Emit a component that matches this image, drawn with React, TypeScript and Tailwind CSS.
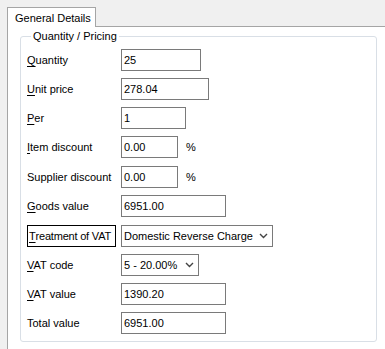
const font = { fontFamily: '"Liberation Sans", Arial, sans-serif' };

type Row = {
  key: string;
  label: string;
  hot?: number;
  value: string;
  width: string;
  kind?: "input" | "select";
  suffix?: string;
  boxed?: boolean;
  extra?: string;
};

const rows: Row[] = [
  { key: "qty", label: "Quantity", hot: 0, value: "25", width: "w-[80px]" },
  { key: "unit", label: "Unit price", hot: 0, value: "278.04", width: "w-[88px]" },
  { key: "per", label: "Per", hot: 0, value: "1", width: "w-[65px]" },
  { key: "item", label: "Item discount", hot: 0, value: "0.00", width: "w-[57px]", suffix: "%" },
  { key: "supp", label: "Supplier discount", value: "0.00", width: "w-[57px]", suffix: "%", extra: "mt-px" },
  { key: "goods", label: "Goods value", hot: 0, value: "6951.00", width: "w-[105px]" },
  {
    key: "vatTreat",
    label: "Treatment of VAT",
    hot: 0,
    value: "Domestic Reverse Charge",
    width: "w-[152px]",
    kind: "select",
    boxed: true,
    extra: "mt-px",
  },
  { key: "vatCode", label: "VAT code", hot: 0, value: "5 - 20.00%", width: "w-[78px]", kind: "select" },
  { key: "vatValue", label: "VAT value", hot: 0, value: "1390.20", width: "w-[105px]" },
  { key: "total", label: "Total value", value: "6951.00", width: "w-[105px]" },
];

function Label({ text, hot }: { text: string; hot?: number }) {
  if (hot === undefined) return <>{text}</>;
  return (
    <>
      {text.slice(0, hot)}
      <span className="underline underline-offset-2">{text[hot]}</span>
      {text.slice(hot + 1)}
    </>
  );
}

function Chevron() {
  return (
    <svg width="9" height="6" viewBox="0 0 9 6" className="shrink-0">
      <polyline points="1,1 4.5,4.5 8,1" fill="none" stroke="#444" strokeWidth="1.4" />
    </svg>
  );
}

export default function App() {
  return (
    <div className="h-[349px] w-[385px] overflow-hidden bg-[#f0f0f0] pl-[7px] pt-[7px] text-[11px] text-black" style={font}>
      <div className="relative z-10 -mb-px flex h-[20px] w-[89px] items-center border border-b-0 border-[#a5a5a5] bg-white pl-[7px] pt-px">
        General Details
      </div>
      <div className="h-[330px] border-l border-t border-[#a5a5a5] bg-white pl-[12px] pt-[2px]">
        <fieldset className="h-[313px] w-[357px] rounded-[3px] border border-[#d9dfe6] pl-[6px]">
          <legend className="ml-[4px] px-[2px] leading-[14px]">Quantity / Pricing</legend>
          <div className="mt-[6px] flex flex-col gap-[7px]">
            {rows.map((row) => (
              <div key={row.key} className={`flex h-[22px] items-center ${row.extra ?? ""}`}>
                <div className="w-[94px]">
                  {row.boxed ? (
                    <span className="flex h-[22px] w-[89px] items-center whitespace-nowrap border border-black pl-[1px] tracking-[-0.2px]">
                      <Label text={row.label} hot={row.hot} />
                    </span>
                  ) : (
                    <Label text={row.label} hot={row.hot} />
                  )}
                </div>
                <div
                  className={`flex h-[22px] items-center justify-between border border-[#7a7a7a] bg-white pl-[2px] pr-[4px] ${row.width}`}
                >
                  <span>{row.value}</span>
                  {row.kind === "select" && <Chevron />}
                </div>
                {row.suffix && <span className="ml-[8px]">{row.suffix}</span>}
              </div>
            ))}
          </div>
        </fieldset>
      </div>
    </div>
  );
}
